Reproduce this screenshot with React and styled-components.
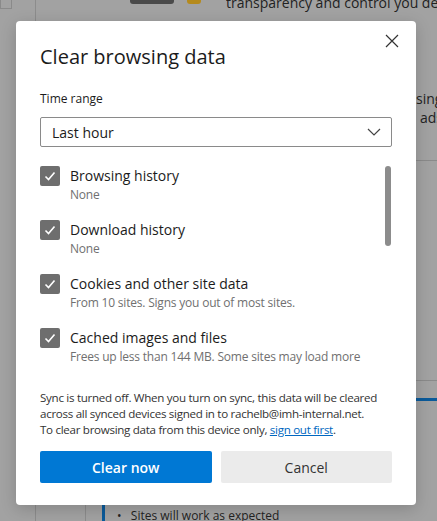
import React from 'react'
import styled, { createGlobalStyle } from 'styled-components'

const Global = createGlobalStyle`
  html, body { margin: 0; padding: 0; }
  body { font-family: "Open Sans", "Noto Sans", sans-serif; }
`

const Page = styled.div`
  position: relative;
  width: 437px;
  height: 521px;
  overflow: hidden;
  background: #a2a2a2;
  color: #1b1b1b;
`

const Backdrop = styled.div`
  position: absolute;
  inset: 0;
  font-size: 14px;
  color: #222;
`

const Deco = styled.div`
  position: absolute;
  left: ${(p) => p.x}px;
  top: ${(p) => p.y}px;
  width: ${(p) => p.w}px;
  height: ${(p) => p.h}px;
  background: ${(p) => p.bg || 'transparent'};
  border-radius: ${(p) => p.r || 0}px;
  white-space: nowrap;
  overflow: hidden;
`

const Dialog = styled.div`
  position: absolute;
  left: 16px;
  top: 21px;
  width: 400px;
  height: 484px;
  box-sizing: border-box;
  background: #fff;
  border-radius: 4px;
  box-shadow: 0 4px 16px rgba(0, 0, 0, 0.18);
  padding: 22px 24px 0;
  display: flex;
  flex-direction: column;
`

const Close = styled.button`
  position: absolute;
  right: 12px;
  top: 8px;
  width: 24px;
  height: 24px;
  border: none;
  background: none;
  padding: 0;
  display: grid;
  place-items: center;
`

const Title = styled.h1`
  margin: 0;
  font-size: 20px;
  font-weight: 400;
  line-height: 28px;
`

const Label = styled.div`
  margin-top: 20px;
  font-size: 12px;
  line-height: 16px;
`

const Select = styled.div`
  margin-top: 10px;
  height: 30px;
  box-sizing: border-box;
  border: 1px solid #8a8a8a;
  border-radius: 2px;
  display: flex;
  align-items: center;
  justify-content: space-between;
  padding: 0 10px 0 11px;
  font-size: 14px;
`

const ListWrap = styled.div`
  margin-top: 19px;
  display: flex;
  justify-content: space-between;
`

const List = styled.div`
  display: flex;
  flex-direction: column;
  gap: 16px;
`

const Item = styled.div`
  display: flex;
  gap: 10px;
`

const Box = styled.div`
  width: 20px;
  height: 20px;
  border-radius: 2px;
  background: #6e6e6e;
  display: grid;
  place-items: center;
  flex: none;
`

const ItemText = styled.div`
  display: flex;
  flex-direction: column;
`

const ItemTitle = styled.div`
  font-size: 14px;
  line-height: 20px;
`

const ItemSub = styled.div`
  font-size: 12px;
  line-height: 18px;
  letter-spacing: -0.2px;
  color: #707070;
`

const Scroll = styled.div`
  width: 6px;
  height: 80px;
  border-radius: 3px;
  background: #8c8c8c;
  margin-right: 1px;
`

const Note = styled.p`
  margin: 24px 0 0;
  font-size: 11.6px;
  line-height: 16px;
  letter-spacing: -0.3px;
  white-space: nowrap;
  color: #333;
`

const Link = styled.a`
  color: #0067c0;
  text-decoration: underline;
`

const Buttons = styled.div`
  margin-top: 13px;
  display: grid;
  grid-template-columns: 1fr 1fr;
  gap: 9px;
`

const Button = styled.button`
  height: 32px;
  border: none;
  border-radius: 2px;
  font-family: inherit;
  font-size: 14px;
  font-weight: ${(p) => (p.primary ? 600 : 400)};
  background: ${(p) => (p.primary ? '#0078d4' : '#ebebeb')};
  color: ${(p) => (p.primary ? '#fff' : '#333')};
`

const Check = () => (
  <svg width="14" height="14" viewBox="0 0 14 14">
    <path d="M2.5 7.5 L5.5 10.5 L11.5 3.5" fill="none" stroke="#fff" strokeWidth="1.6" />
  </svg>
)

const items = [
  ['Browsing history', 'None'],
  ['Download history', 'None'],
  ['Cookies and other site data', 'From 10 sites. Signs you out of most sites.'],
  ['Cached images and files', 'Frees up less than 144 MB. Some sites may load more'],
]

export default function App() {
  return (
    <Page>
      <Global />
      <Backdrop>
        <Deco x={0} y={0} w={10} h={8} style={{ border: '1px solid #8a8a8a', borderTop: 'none' }} />
        <Deco x={35} y={0} w={1} h={521} bg="#8c8c8c" />
        <Deco x={96} y={-10} w={20} h={10} bg="#8e8e8e" r={6} />
        <Deco x={130} y={-6} w={44} h={10} bg="#4a4a4a" r={3} />
        <Deco x={187} y={-6} w={14} h={10} bg="#b58a1c" r={3} />
        <Deco x={226} y={-7} w={211} h={20}>transparency and control you dese</Deco>
        <Deco x={416} y={89} w={21} h={20}>sing</Deco>
        <Deco x={420} y={108} w={17} h={20}>ads</Deco>
        <Deco x={416} y={160} w={21} h={1} bg="#8a8a8a" />
        <Deco x={416} y={380} w={21} h={1} bg="#8a8a8a" />
        <Deco x={416} y={398} w={21} h={3} bg="#0a5a9a" />
        <Deco x={85} y={505} w={1} h={16} bg="#8c8c8c" />
        <Deco x={102} y={505} w={3} h={16} bg="#0a5a9a" />
        <Deco x={117} y={507} w={200} h={16} style={{ fontSize: 12 }}>•&nbsp;&nbsp;&nbsp;Sites will work as expected</Deco>
      </Backdrop>
      <Dialog>
        <Close aria-label="Close">
          <svg width="14" height="14" viewBox="0 0 14 14">
            <path d="M1 1 L13 13 M13 1 L1 13" stroke="#333" strokeWidth="1.2" />
          </svg>
        </Close>
        <Title>Clear browsing data</Title>
        <Label>Time range</Label>
        <Select>
          <span>Last hour</span>
          <svg width="14" height="8" viewBox="0 0 14 8">
            <path d="M1 1 L7 7 L13 1" fill="none" stroke="#444" strokeWidth="1.2" />
          </svg>
        </Select>
        <ListWrap>
          <List>
            {items.map(([t, s]) => (
              <Item key={t}>
                <Box><Check /></Box>
                <ItemText>
                  <ItemTitle>{t}</ItemTitle>
                  <ItemSub>{s}</ItemSub>
                </ItemText>
              </Item>
            ))}
          </List>
          <Scroll />
        </ListWrap>
        <Note>
          Sync is turned off. When you turn on sync, this data will be cleared
          <br />
          across all synced devices signed in to rachelb@imh-internal.net.
          <br />
          To clear browsing data from this device only, <Link>sign out first</Link>.
        </Note>
        <Buttons>
          <Button primary>Clear now</Button>
          <Button>Cancel</Button>
        </Buttons>
      </Dialog>
    </Page>
  )
}
